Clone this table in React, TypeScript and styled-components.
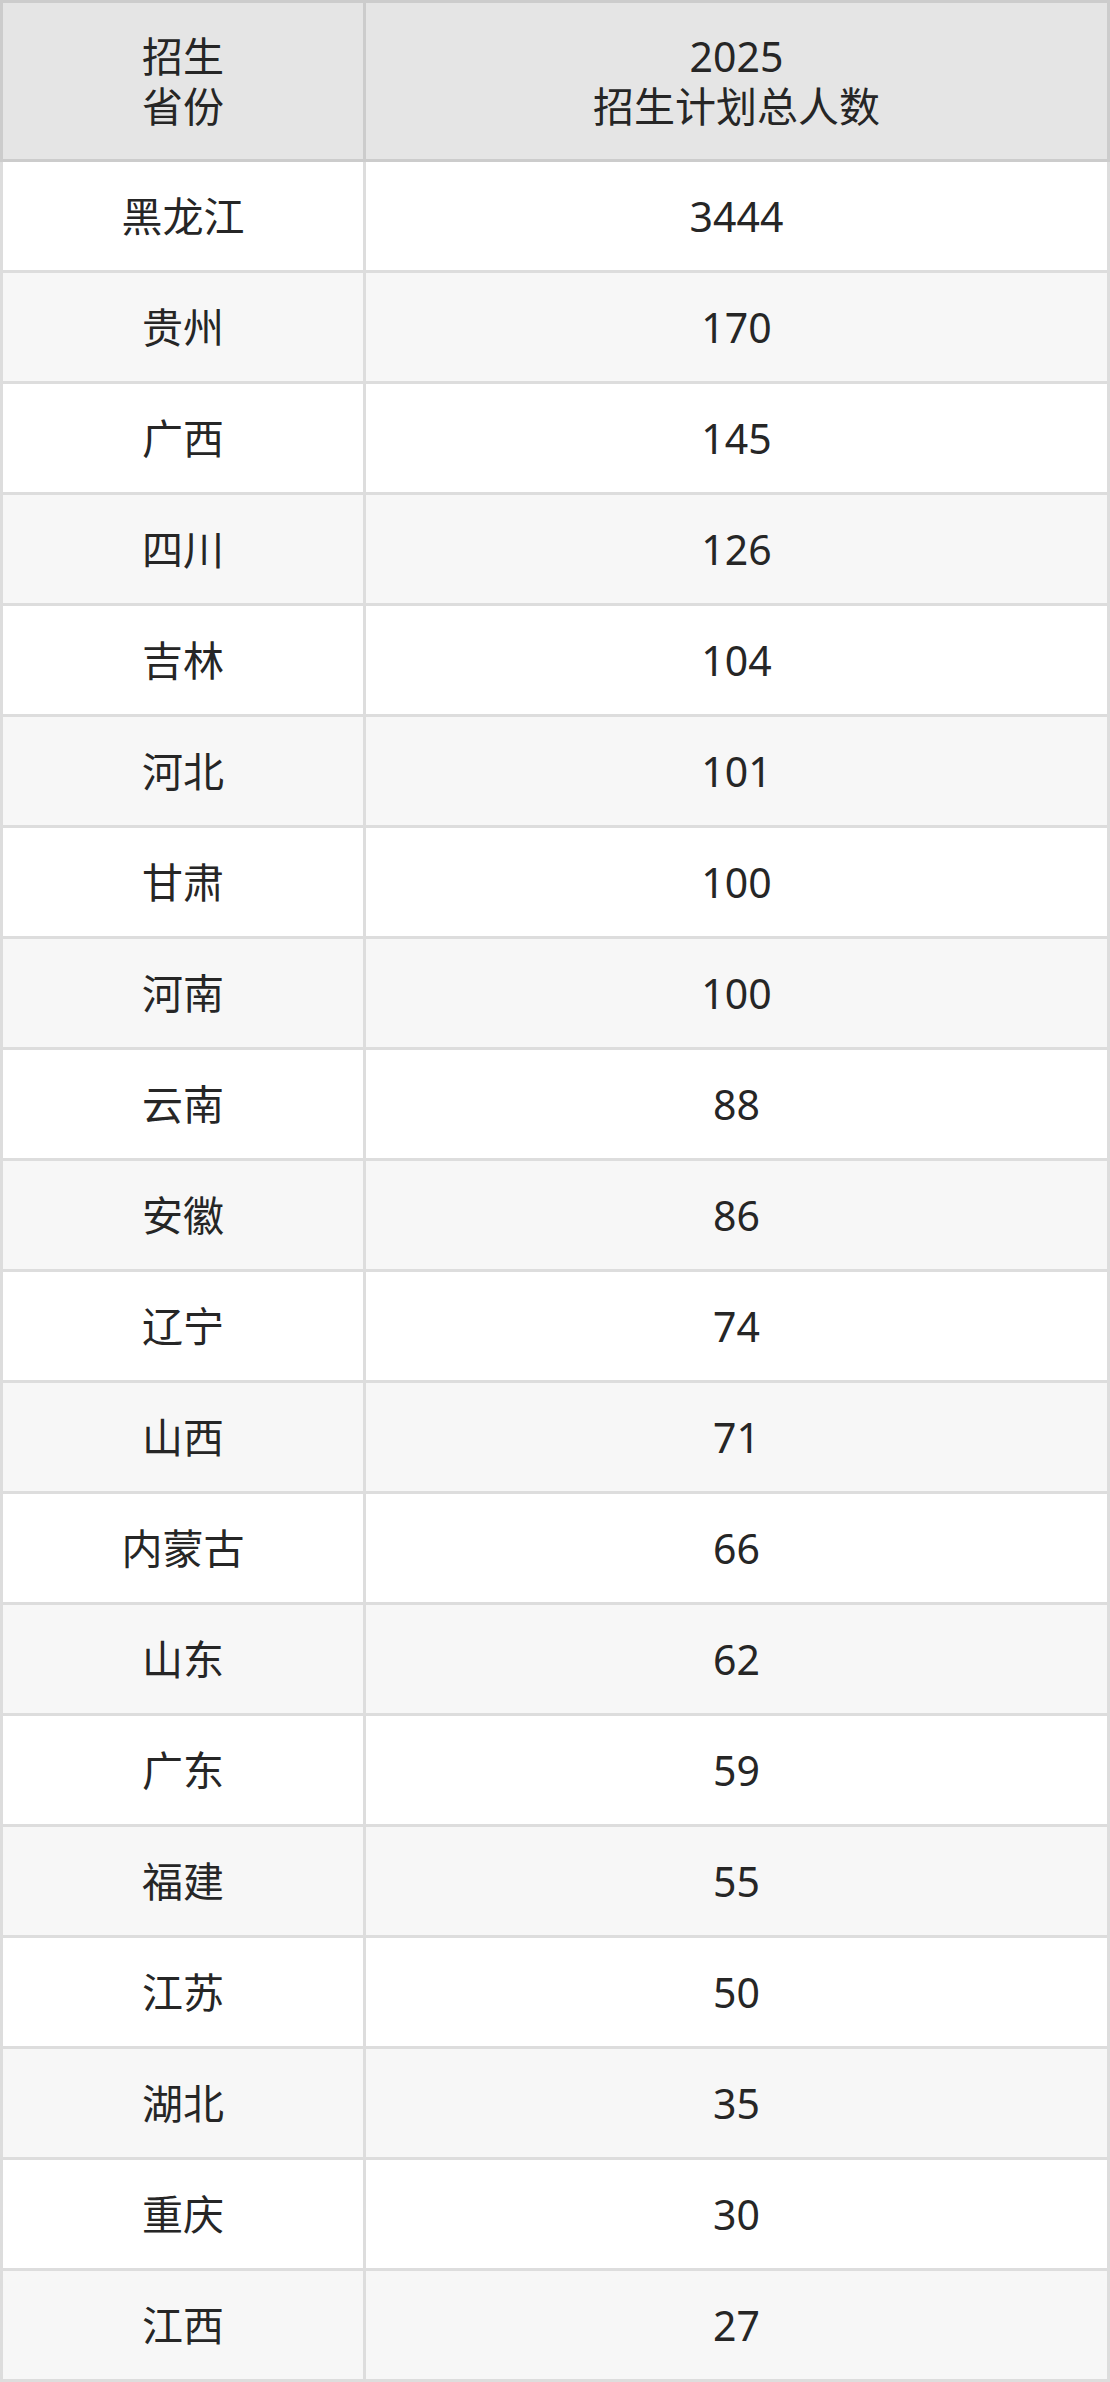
import * as React from 'react'
import styled, { createGlobalStyle, css } from 'styled-components'

const GlobalStyle = createGlobalStyle`
  html, body {
    margin: 0;
    padding: 0;
    background: #ffffff;
  }
`

const Table = styled.div`
  display: grid;
  grid-template-columns: 366px 1fr;
  width: 1110px;
  font-family: 'Noto Sans', 'Noto Sans CJK SC', sans-serif;
  color: #262626;
`

const cellBase = css`
  box-sizing: border-box;
  display: flex;
  align-items: center;
  justify-content: center;
  text-align: center;
  font-size: 41px;
  line-height: 50px;
  border-right: 3px solid #dddddd;
  border-bottom: 3px solid #dddddd;
`

const HeadCell = styled.div<{ first?: boolean }>`
  ${cellBase}
  height: 162px;
  background: #e5e5e5;
  border-top: 3px solid #cccccc;
  border-right-color: #cccccc;
  border-bottom-color: #cccccc;
  ${props => props.first && css`border-left: 3px solid #cccccc;`}
`

const Cell = styled.div<{ first?: boolean; striped?: boolean }>`
  ${cellBase}
  height: 111px;
  background: ${props => (props.striped ? '#f7f7f7' : '#ffffff')};
  ${props => props.first && css`border-left: 3px solid #dddddd;`}
`

const rows: [string, number][] = [
  ['黑龙江', 3444],
  ['贵州', 170],
  ['广西', 145],
  ['四川', 126],
  ['吉林', 104],
  ['河北', 101],
  ['甘肃', 100],
  ['河南', 100],
  ['云南', 88],
  ['安徽', 86],
  ['辽宁', 74],
  ['山西', 71],
  ['内蒙古', 66],
  ['山东', 62],
  ['广东', 59],
  ['福建', 55],
  ['江苏', 50],
  ['湖北', 35],
  ['重庆', 30],
  ['江西', 27],
]

export default function App() {
  return (
    <>
      <GlobalStyle />
      <Table>
        <HeadCell first>招生<br />省份</HeadCell>
        <HeadCell>2025<br />招生计划总人数</HeadCell>
        {rows.map(([province, count], i) => (
          <React.Fragment key={province}>
            <Cell first striped={i % 2 === 1}>{province}</Cell>
            <Cell striped={i % 2 === 1}>{count}</Cell>
          </React.Fragment>
        ))}
      </Table>
    </>
  )
}
